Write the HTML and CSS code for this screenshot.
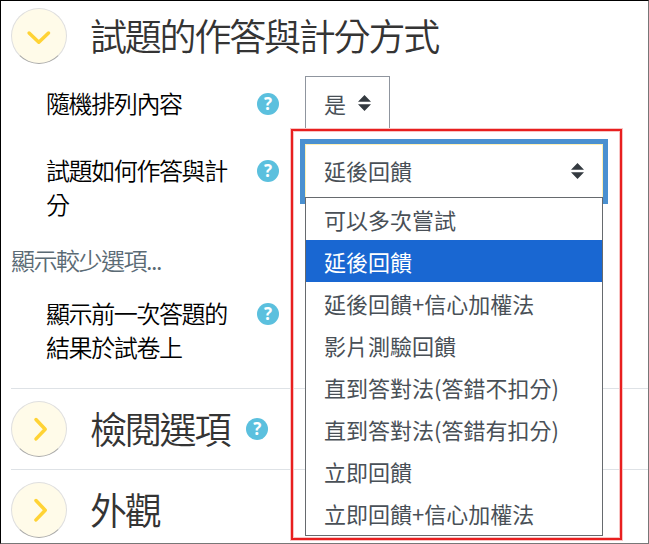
FILE: index.html
```html
<!DOCTYPE html>
<html lang="zh-Hant">
<head>
<meta charset="utf-8">
<title>試題的作答與計分方式</title>
<link rel="stylesheet" href="styles.css">
</head>
<body>
<svg width="0" height="0" class="defs">
  <symbol id="chev" viewBox="0 0 56 56"><path d="M25 18.5 L34.2 28.2 L25 37.9" fill="none" stroke="#ffd335" stroke-width="3.5" stroke-linecap="round" stroke-linejoin="round"/></symbol>
  <symbol id="sort" viewBox="0 0 13 16"><path d="M0 6.8 L6.5 0 L13 6.8Z M0 9.2 L6.5 16 L13 9.2Z" fill="#343a40"/></symbol>
</svg>
<main class="page">
  <section class="section first">
    <header class="section-head">
      <span class="toggle open"><svg><use href="#chev"/></svg></span>
      <h3>試題的作答與計分方式</h3>
    </header>
    <div class="row shuffle">
      <label>隨機排列內容</label><span class="help">?</span>
      <div class="select small">是<svg class="sort"><use href="#sort"/></svg></div>
    </div>
    <div class="row behaviour">
      <label>試題如何作答與計分</label><span class="help">?</span>
      <div class="select focus"><span class="value">延後回饋</span><svg class="sort"><use href="#sort"/></svg>
        <ul class="menu">
          <li>可以多次嘗試</li>
          <li class="active">延後回饋</li>
          <li>延後回饋+信心加權法</li>
          <li>影片測驗回饋</li>
          <li>直到答對法(答錯不扣分)</li>
          <li>直到答對法(答錯有扣分)</li>
          <li>立即回饋</li>
          <li>立即回饋+信心加權法</li>
        </ul>
      </div>
    </div>
    <a class="less">顯示較少選項...</a>
    <div class="row last">
      <label>顯示前一次答題的結果於試卷上</label><span class="help">?</span>
    </div>
  </section>
  <section class="section">
    <header class="section-head">
      <span class="toggle"><svg><use href="#chev"/></svg></span>
      <h3>檢閱選項</h3><span class="help">?</span>
    </header>
  </section>
  <section class="section">
    <header class="section-head">
      <span class="toggle"><svg><use href="#chev"/></svg></span>
      <h3>外觀</h3>
    </header>
  </section>
  <div class="highlight"></div>
</main>
</body>
</html>
```
FILE: styles.css
```css
* { box-sizing: border-box; }
body {
  margin: 0;
  background: #fff;
  font-family: "Noto Sans CJK TC", sans-serif;
  color: #000;
}
.defs { position: absolute; }
.page {
  position: relative;
  width: 649px;
  height: 544px;
  overflow: hidden;
  border: 1px solid #000;
  border-right-color: #777;
  border-bottom-color: #777;
  padding-left: 10px;
}
.section {
  height: 81px;
  border-top: 1px solid #dee2e6;
  padding-top: 11px;
}
.section.first {
  height: 387px;
  border-top: 0;
  padding-top: 7px;
}
.section-head {
  display: flex;
  align-items: center;
  height: 57px;
}
.first .section-head { height: 56px; }
.toggle {
  width: 56px;
  height: 56px;
  border-radius: 50%;
  background: #fffbe9;
  border: 1px solid #dfdfdf;
  border-bottom-color: #a9a9a9;
  flex: none;
}
.toggle svg { display: block; width: 56px; height: 56px; margin: -1px; }
.toggle.open svg { transform: rotate(90deg); }
h3 {
  margin: 0 0 0 23px;
  padding-bottom: 2px;
  font-size: 37px;
  font-weight: 350;
  letter-spacing: -2.2px;
  line-height: 54px;
  color: #343434;
  white-space: nowrap;
}
.help {
  flex: none;
  width: 22px;
  height: 22px;
  border-radius: 50%;
  background: #5bc0de;
  color: #fff;
  font: 700 17px/22px "Open Sans", sans-serif;
  text-align: center;
}
.section-head .help { margin-left: 17px; }
.row {
  display: flex;
  align-items: flex-start;
  padding-left: 35px;
}
.row label {
  width: 188px;
  margin: -1px 23px 0 0;
  font-size: 24px;
  font-weight: 350;
  letter-spacing: -1.4px;
  line-height: 34px;
}
.row .help { margin-top: 6px; }
.shuffle { height: 67px; padding-top: 23px; }
.behaviour { height: 91px; padding-top: 23px; }
.select {
  position: relative;
  display: flex;
  align-items: center;
  justify-content: space-between;
  height: 55px;
  margin: -11px 0 0 26px;
  padding: 0 18px;
  border: 1px solid #8f959e;
  background: #fff;
  font-size: 22px;
  color: #495057;
}
.small { width: 85px; height: 53px; border-bottom: 0; }
.focus {
  width: 298px;
  margin-top: -10px;
  padding-bottom: 2px;
  border-color: #fff0b5;
  box-shadow: 0 0 0 5px #4a90d0;
}
.value { padding-bottom: 2px; }
.sort { width: 13px; height: 16px; flex: none; }
.menu {
  position: absolute;
  top: 52px;
  left: -1px;
  z-index: 2;
  width: 298px;
  height: 339px;
  margin: 0;
  padding: 0;
  list-style: none;
  background: #fff;
  border: 1px solid #666a6e;
}
.menu li {
  height: 42px;
  padding-left: 18px;
  line-height: 42px;
  white-space: nowrap;
}
.menu .active { background: #1967d2; color: #fff; }
.less {
  display: block;
  margin-top: 21px;
  font-size: 24px;
  font-weight: 350;
  letter-spacing: -1.5px;
  line-height: 34px;
  color: #5b6b75;
}
.last { padding-top: 20px; }
.highlight {
  position: absolute;
  z-index: 3;
  left: 290px;
  top: 128px;
  width: 331px;
  height: 411px;
  border: 2px solid #e81f1f;
  box-shadow: 0 0 0 1px #f8c4c4, inset 0 0 0 1px #f8c4c4;
}
```
